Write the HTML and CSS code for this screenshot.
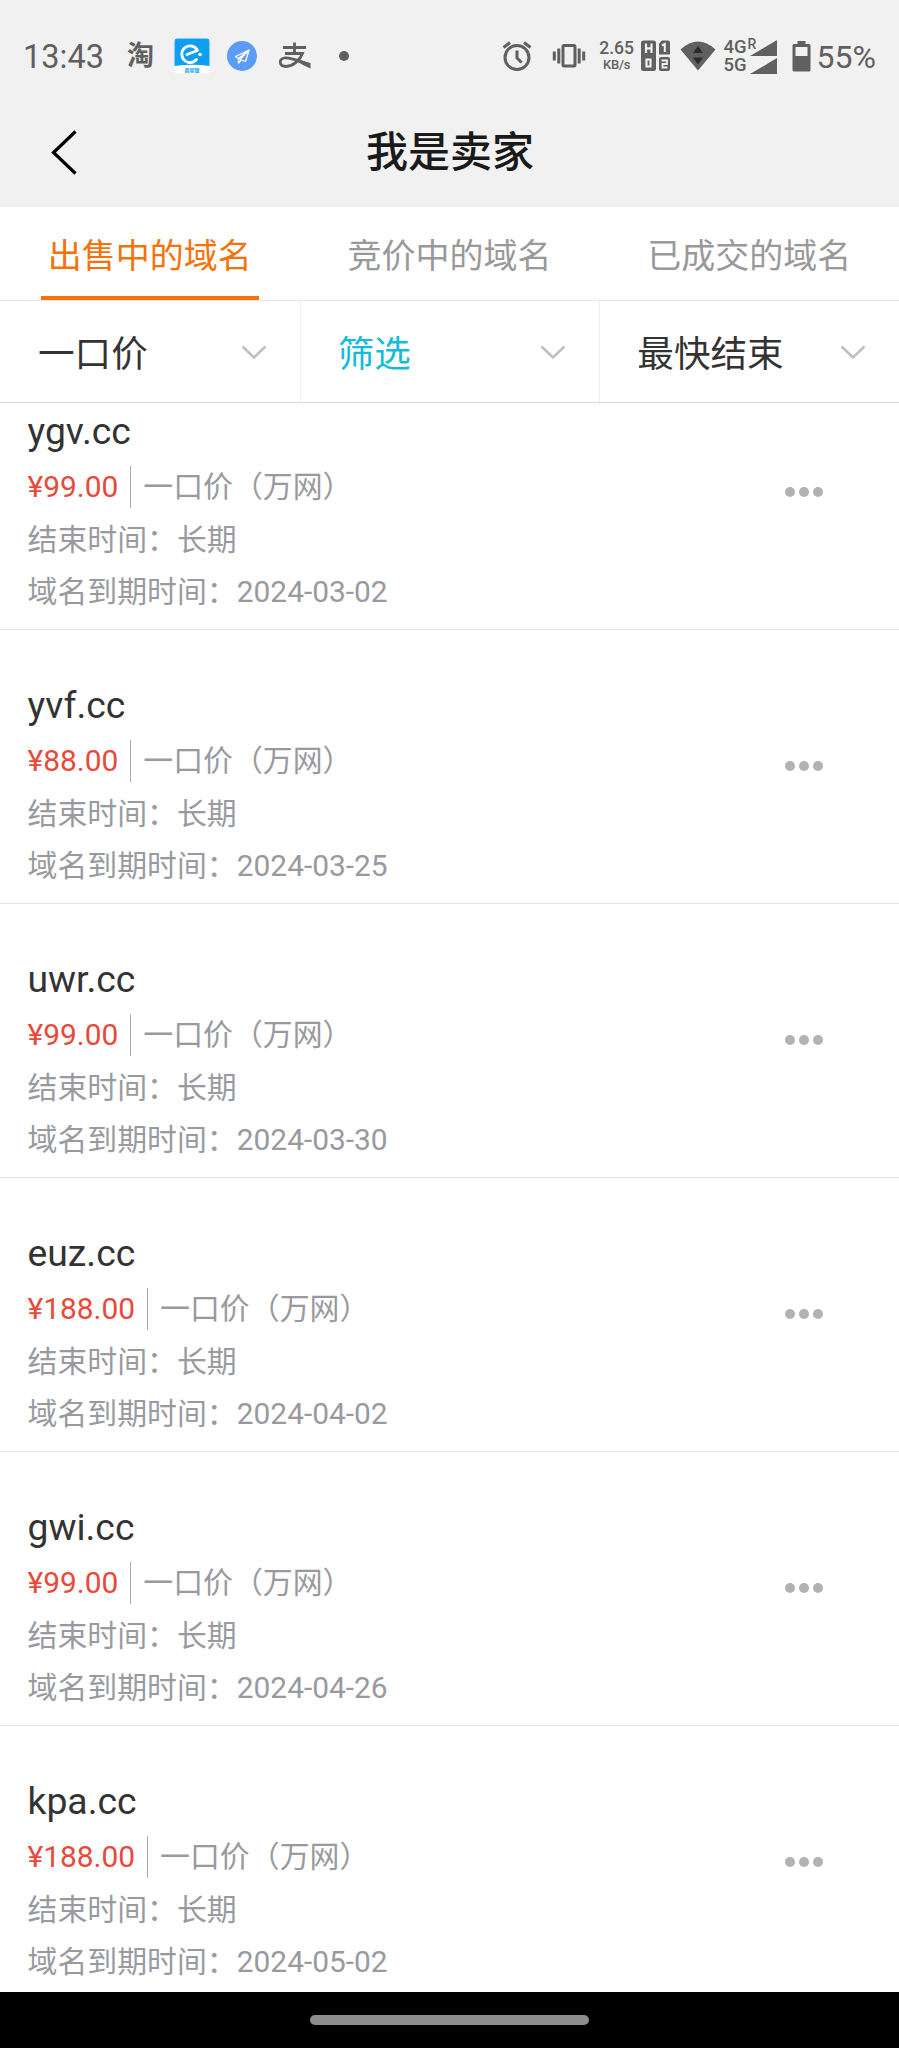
FILE: index.html
```html
<!DOCTYPE html>
<html lang="zh-CN">
<head>
<meta charset="utf-8">
<title>我是卖家</title>
<link rel="stylesheet" href="styles.css">
</head>
<body>
<div class="screen">
  <header class="top">
    <div class="status">
      <div class="status-left">
        <span class="clock">13:43</span>
        <span class="tao">淘</span>
        <svg class="app" width="36" height="36" viewBox="0 0 36 36"><rect x="0.500" y="0.500" width="35" height="35" rx="3" fill="#fff"/><path d="M0.500 28V3.500a3 3 0 0 1 3-3h29a3 3 0 0 1 3 3V28Q18 25.500 0.500 28z" fill="#0e9ff0"/><path d="M13 16.500L23.500 12.500A8.300 8.300 0 1 0 22.500 21.500" fill="none" stroke="#fff" stroke-width="2.800" stroke-linecap="round" stroke-linejoin="round"/><circle cx="26" cy="16.500" r="1.800" fill="#fff"/><text x="18" y="34" class="app-label">商家版</text></svg>
        <svg class="plane" width="30" height="30" viewBox="0 0 30 30"><circle cx="15" cy="15" r="15" fill="#5b9bfa"/><path d="M22 9L8.500 15.500L11.500 17.500L22 9L13 18.500L18.500 20.500L22 9M11.500 17.500V22L14.500 19" fill="none" stroke="#fff" stroke-width="1.300" stroke-linejoin="round"/></svg>
        <svg class="zhi" width="34" height="28" viewBox="0 0 34 28"><path d="M5 5.500H28M16.500 0.500V11M7 11.500H24.500C22 18 15 24.500 8 24.500C1 24.500 0.500 17.500 6 16C12 14.500 20 19 31 22.500" fill="none" stroke="#606060" stroke-width="2.800"/><path d="M19 17.500L32.500 21V26.500Q25 23.500 19 19.500z" fill="#606060"/></svg>
        <span class="dot"></span>
      </div>
      <div class="status-right">
        <svg class="alarm" width="30" height="30" viewBox="0 0 30 30" fill="none" stroke="#606060" stroke-width="3"><circle cx="15" cy="16.500" r="12"/><path d="M15 9.500V17L19.500 21.500M1.500 6.500L8 1.500M22 1.500L28.500 6.500"/></svg>
        <svg class="vibrate" width="34" height="26" viewBox="0 0 34 26" fill="none" stroke="#606060" stroke-width="3"><rect x="11" y="2.500" width="12" height="20.500" rx="1"/><path d="M6.800 5.500V20.500M27.200 5.500V20.500M2.300 8.500V17.500M31.700 8.500V17.500"/></svg>
        <div class="speed"><b>2.65</b><b class="unit">KB/s</b></div>
        <svg class="hd" width="30" height="32" viewBox="0 0 30 32"><rect x="0" y="0.500" width="15" height="30.500" rx="2.500" fill="#606060"/><path d="M5 3.500V13M10.500 3.500V13M5 8.300H10.500M5.500 19.500H9.500V26.500H5.500z" fill="none" stroke="#f1f1f1" stroke-width="2.200"/><path d="M21 0.500H27a2 2 0 0 1 2 2V14.500H18V3.500z" fill="#606060"/><path d="M21 5.500L23.800 4V12" fill="none" stroke="#f1f1f1" stroke-width="2"/><rect x="18" y="17" width="11" height="14" rx="2" fill="#606060"/><path d="M20.500 20.500H26V24H21.500V27.500H26.500" fill="none" stroke="#f1f1f1" stroke-width="1.800"/></svg>
        <svg class="wifi" width="36" height="30" viewBox="0 0 36 30"><path d="M0.500 8.500Q18-7.500 35.500 8.500L18 29.500z" fill="#606060"/><path d="M13 12L18 5L23 12zM13 16.500H23L18 23.500z" fill="#2b2b2b"/></svg>
        <div class="net">
          <div class="net-row"><b>4G</b><sup>R</sup><svg class="tri" width="27" height="16" viewBox="0 0 27 16"><path d="M0 16L27 0V16z" fill="#606060"/></svg></div>
          <div class="net-row"><b>5G</b><svg class="tri" width="27" height="16" viewBox="0 0 27 16"><path d="M0 16L27 0V16z" fill="#606060"/></svg></div>
        </div>
        <svg class="battery" width="19" height="31" viewBox="0 0 19 31"><path d="M5.500 0H13.500V3H17a1.500 1.500 0 0 1 1.500 1.500V29a1.500 1.500 0 0 1-1.500 1.500H2A1.500 1.500 0 0 1 0.500 29V4.500A1.500 1.500 0 0 1 2 3H5.500z" fill="#606060"/><rect x="3.500" y="6" width="12" height="9" fill="#f1f1f1"/></svg>
        <span class="percent">55%</span>
      </div>
    </div>
    <div class="nav">
      <svg class="back" width="27" height="45" viewBox="0 0 27 45"><path d="M24.500 1.500L2.500 22.500L24.500 43.500" fill="none" stroke="#000" stroke-width="3.200"/></svg>
      <h1 class="title">我是卖家</h1>
    </div>
  </header>
  <nav class="tabs">
    <div class="tab"><span class="tab-label active">出售中的域名</span></div>
    <div class="tab"><span class="tab-label">竞价中的域名</span></div>
    <div class="tab"><span class="tab-label">已成交的域名</span></div>
  </nav>
  <div class="filters">
    <div class="filter"><span>一口价</span><svg width="26" height="15" viewBox="0 0 26 15"><path d="M1.500 1.500L13 12.500L24.500 1.500" fill="none" stroke="#c0c0c0" stroke-width="2.600"/></svg></div>
    <div class="filter cyan"><span>筛选</span><svg width="26" height="15" viewBox="0 0 26 15"><path d="M1.500 1.500L13 12.500L24.500 1.500" fill="none" stroke="#c0c0c0" stroke-width="2.600"/></svg></div>
    <div class="filter"><span>最快结束</span><svg width="26" height="15" viewBox="0 0 26 15"><path d="M1.500 1.500L13 12.500L24.500 1.500" fill="none" stroke="#c0c0c0" stroke-width="2.600"/></svg></div>
  </div>
  <main class="list">
    <article class="item first"><div class="info"><h2 class="name">ygv.cc</h2><div class="line"><span class="price">¥99.00</span><span class="kind">一口价（万网）</span></div><div class="line">结束时间：长期</div><div class="line">域名到期时间：2024-03-02</div></div><div class="more"><i></i><i></i><i></i></div></article>
    <article class="item"><div class="info"><h2 class="name">yvf.cc</h2><div class="line"><span class="price">¥88.00</span><span class="kind">一口价（万网）</span></div><div class="line">结束时间：长期</div><div class="line">域名到期时间：2024-03-25</div></div><div class="more"><i></i><i></i><i></i></div></article>
    <article class="item"><div class="info"><h2 class="name">uwr.cc</h2><div class="line"><span class="price">¥99.00</span><span class="kind">一口价（万网）</span></div><div class="line">结束时间：长期</div><div class="line">域名到期时间：2024-03-30</div></div><div class="more"><i></i><i></i><i></i></div></article>
    <article class="item"><div class="info"><h2 class="name">euz.cc</h2><div class="line"><span class="price">¥188.00</span><span class="kind">一口价（万网）</span></div><div class="line">结束时间：长期</div><div class="line">域名到期时间：2024-04-02</div></div><div class="more"><i></i><i></i><i></i></div></article>
    <article class="item"><div class="info"><h2 class="name">gwi.cc</h2><div class="line"><span class="price">¥99.00</span><span class="kind">一口价（万网）</span></div><div class="line">结束时间：长期</div><div class="line">域名到期时间：2024-04-26</div></div><div class="more"><i></i><i></i><i></i></div></article>
    <article class="item"><div class="info"><h2 class="name">kpa.cc</h2><div class="line"><span class="price">¥188.00</span><span class="kind">一口价（万网）</span></div><div class="line">结束时间：长期</div><div class="line">域名到期时间：2024-05-02</div></div><div class="more"><i></i><i></i><i></i></div></article>
  </main>
  <footer class="home"><span class="pill"></span></footer>
</div>
</body>
</html>
```
FILE: styles.css
```css
* { box-sizing: border-box; }
body {
  margin: 0;
  background: #fff;
  font-family: Roboto, "Noto Sans CJK SC", sans-serif;
}
h1, h2 { margin: 0; font-weight: 400; }
svg { display: block; flex: none; }
.screen { width: 899px; height: 2048px; display: flex; flex-direction: column; overflow: hidden; }
.top { height: 207px; flex: none; background: #f1f1f1; }
.status { height: 100px; padding: 12px 23px 0 23px; display: flex; justify-content: space-between; color: #606060; }
.status-left, .status-right { display: flex; align-items: center; }
.clock { font-size: 32.500px; width: 104px; padding-top: 2px; white-space: nowrap; }
.tao { font-size: 27px; font-weight: 700; line-height: 30px; width: 47px; }
.app { margin-right: 17px; }
.app-label { font-size: 5px; font-weight: 700; fill: #0e9ff0; text-anchor: middle; }
.plane { margin-right: 21px; }
.zhi { margin-right: 27px; }
.dot { width: 10px; height: 10px; border-radius: 50%; background: #606060; }
.alarm { margin-right: 20px; }
.vibrate { margin-right: 14px; }
.speed { width: 34px; margin-right: 7px; display: flex; flex-direction: column; align-items: center; }
.speed b { font-size: 17.500px; font-weight: 500; line-height: 17px; }
.speed .unit { font-size: 13px; line-height: 15px; letter-spacing: -0.200px; }
.hd { margin-right: 9px; }
.wifi { margin-right: 8px; }
.net { width: 53px; margin-right: 15px; }
.net-row { display: flex; align-items: flex-end; height: 18px; line-height: 18px; }
.net-row b { font-size: 18.500px; font-weight: 500; width: 24px; }
.net-row sup { font-size: 14px; font-weight: 500; line-height: 12px; align-self: flex-start; width: 8px; margin-right: -6px; }
.tri { margin-left: auto; }
.battery { margin-right: 6px; }
.percent { font-size: 32px; padding-top: 2px; }
.nav { height: 105px; display: flex; align-items: center; padding-left: 51px; }
.title { font-size: 42px; font-weight: 500; line-height: 60px; color: #1a1a1a; margin-left: 288px; padding-top: 1px; }
.tabs { height: 94px; flex: none; display: grid; grid-template-columns: repeat(3, 1fr); justify-items: center; border-bottom: 1px solid #e9e9e9; }
.tab { display: flex; }
.tab-label { padding: 10px 7px 0; font-size: 34px; line-height: 79px; color: #999; white-space: nowrap; }
.active { color: #f5720a; border-bottom: 4px solid #f5720a; }
.filters { height: 102px; flex: none; display: grid; grid-template-columns: repeat(3, 1fr); border-bottom: 1px solid #d9d9d9; }
.filter { display: flex; align-items: center; justify-content: space-between; padding: 0 33px 0 38px; font-size: 36.600px; color: #333; }
.filter span { padding-bottom: 1px; }
.filter svg { margin-top: 2px; }
.filter + .filter { border-left: 1px solid #ededed; padding-left: 37px; }
.cyan { color: #13bcd8; }
.list { flex: 1; overflow: hidden; }
.item { height: 274px; padding: 48px 76px 0 27.500px; display: flex; justify-content: space-between; border-bottom: 1px solid #e3e3e3; }
.first { height: 227px; padding-top: 1px; }
.name { font-size: 37.300px; line-height: 54px; margin-bottom: 3px; color: #333; }
.line { display: flex; align-items: center; height: 52.500px; font-size: 29.900px; line-height: 52px; color: #999aa0; white-space: nowrap; }
.price { color: #e74a3b; }
.kind { margin-left: 12px; padding-left: 12px; border-left: 1px solid #aaa; line-height: 42px; }
.more { display: flex; gap: 4px; padding-top: 83px; }
.more i { width: 10px; height: 10px; border-radius: 50%; background: #b2b2b2; }
.home { height: 56px; flex: none; background: #000; display: flex; justify-content: center; padding-top: 23px; }
.pill { width: 279px; height: 10px; border-radius: 5px; background: #8d8d8d; }
```
